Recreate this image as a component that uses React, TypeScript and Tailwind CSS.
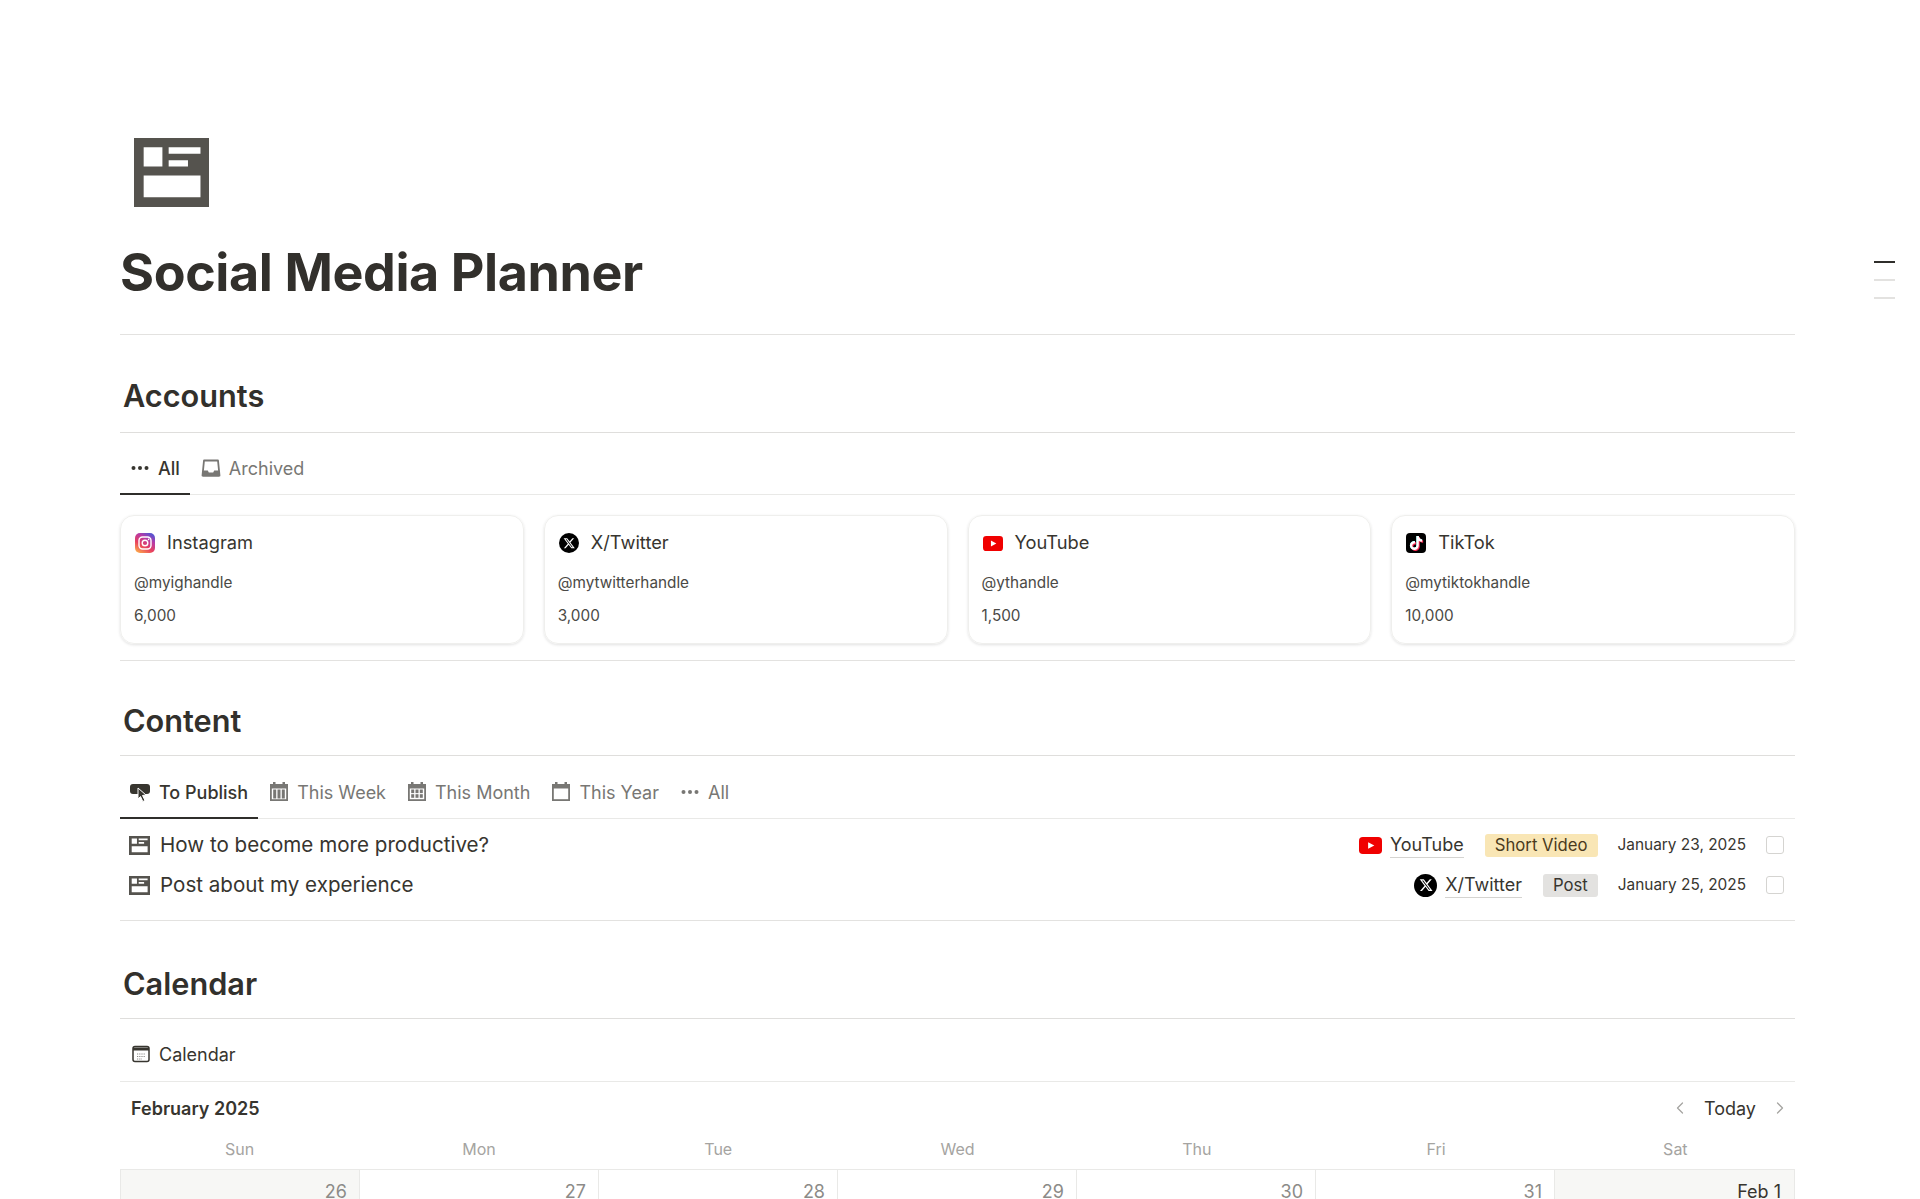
import { ChevronLeft, ChevronRight } from "lucide-react";
import { FaTiktok, FaXTwitter } from "react-icons/fa6";

const PageIcon = ({ className }: { className: string }) => (
  <svg viewBox="0 0 66 70" className={className} preserveAspectRatio="none">
    <path
      fill="#55534e"
      fillRule="evenodd"
      d="M0 0h66v70H0zM8.500 9.500v19.500h16.500V9.500zM30.500 9.500v6.500h28V9.500zM30.500 22.500v6.500h17v-6.500zM8.500 38v22h50V38z"
    />
  </svg>
);

const Dots = ({ color = "#37352f" }: { color?: string }) => (
  <svg viewBox="0 0 20 20" className="h-5 w-5" fill={color}>
    <circle cx="3.500" cy="10" r="2" />
    <circle cx="10" cy="10" r="2" />
    <circle cx="16.500" cy="10" r="2" />
  </svg>
);

const Inbox = () => (
  <svg viewBox="0 0 20 20" className="h-5 w-5" fill="none">
    <path d="M3 2.500h14l1.500 15h-17z" stroke="#787774" strokeWidth="1.800" strokeLinejoin="round" />
    <path d="M1.800 12.500h5l1 2h4.400l1-2h5v6H1.800z" fill="#787774" />
  </svg>
);

const Pointer = () => (
  <svg viewBox="0 0 22 22" className="h-[22px] w-[22px]">
    <rect x="1" y="3" width="20" height="10" rx="3" fill="#37352f" />
    <path d="M9 7l8 7-3.500.5 2.500 5-2.200 1-2.300-5-2.500 2.500z" fill="#37352f" stroke="#fff" strokeWidth="1" />
  </svg>
);

// kind decides which calendar glyph is drawn: week bars, month grid, or empty year page
const CalIcon = ({ kind }: { kind: "week" | "month" | "year" }) => (
  <svg viewBox="0 0 20 20" className="h-5 w-5" fill="#787774">
    <path d="M4 0h2.500v2h7V0H16v2h3v17H1V2h3z" />
    <rect x="2.800" y="6.500" width="14.400" height="10.700" fill="#fff" />
    {kind === "week" && (
      <>
        <rect x="4.200" y="7.500" width="3" height="9" />
        <rect x="8.500" y="7.500" width="3" height="9" />
        <rect x="12.800" y="7.500" width="3" height="9" />
      </>
    )}
    {kind === "month" &&
      [7.500, 12.200].map((y) =>
        [4.200, 8.500, 12.800].map((x) => <rect key={`${x}-${y}`} x={x} y={y} width="3" height="3.600" />),
      )}
  </svg>
);

const Instagram = () => (
  <svg viewBox="0 0 20 20" className="h-5 w-5">
    <defs>
      <linearGradient id="ig" x1="0.100" y1="1" x2="0.700" y2="0">
        <stop offset="0" stopColor="#fdb24a" />
        <stop offset="0.400" stopColor="#e8405f" />
        <stop offset="0.750" stopColor="#b63aa6" />
        <stop offset="1" stopColor="#5b53cf" />
      </linearGradient>
    </defs>
    <rect width="20" height="20" rx="5" fill="url(#ig)" />
    <rect x="4" y="4" width="12" height="12" rx="3.500" fill="none" stroke="#fff" strokeWidth="1.400" />
    <circle cx="10" cy="10" r="2.800" fill="none" stroke="#fff" strokeWidth="1.400" />
    <circle cx="13.600" cy="6.400" r="0.800" fill="#fff" />
  </svg>
);

const XLogo = ({ size }: { size: string }) => (
  <span className={`flex items-center justify-center rounded-full bg-black text-white ${size}`}>
    <FaXTwitter className="h-[62%] w-[62%]" />
  </span>
);

const YouTube = ({ size }: { size: string }) => (
  <svg viewBox="0 0 24 18" className={size} preserveAspectRatio="none">
    <rect width="24" height="18" rx="4" fill="#f00000" />
    <path d="M9.500 5.500L16 9l-6.500 3.500z" fill="#fff" />
  </svg>
);

const TikTok = () => (
  <span className="relative flex h-5 w-5 items-center justify-center rounded-[4px] bg-black">
    <FaTiktok className="absolute left-[2.500px] top-[3px] h-3.5 w-3.5 text-[#25f4ee]" />
    <FaTiktok className="absolute left-[3.500px] top-[3.500px] h-3.5 w-3.5 text-[#fe2c55]" />
    <FaTiktok className="absolute left-[3px] top-[3px] h-3.5 w-3.5 text-white" />
  </span>
);

const accounts = [
  { name: "Instagram", handle: "@myighandle", count: "6,000", icon: <Instagram /> },
  { name: "X/Twitter", handle: "@mytwitterhandle", count: "3,000", icon: <XLogo size="h-5 w-5" /> },
  {
    name: "YouTube",
    handle: "@ythandle",
    count: "1,500",
    icon: (
      <span className="flex h-5 w-5 items-center">
        <YouTube size="h-[15px] w-5" />
      </span>
    ),
  },
  { name: "TikTok", handle: "@mytiktokhandle", count: "10,000", icon: <TikTok /> },
];

const days = [
  { name: "Sun", num: "26", muted: true },
  { name: "Mon", num: "27" },
  { name: "Tue", num: "28" },
  { name: "Wed", num: "29" },
  { name: "Thu", num: "30" },
  { name: "Fri", num: "31" },
  { name: "Sat", num: "Feb 1", muted: true, dark: true },
];

const Heading = ({ children }: { children: string }) => (
  <h2 className="flex h-[42px] items-center pl-[3px] text-[30.700px] font-semibold text-[#32302c]">{children}</h2>
);

const Tab = ({
  icon,
  label,
  active,
  className,
}: {
  icon: React.ReactNode;
  label: string;
  active?: boolean;
  className: string;
}) => (
  <div
    className={`flex h-[52px] items-center gap-[8px] ${className} text-[18px] ${
      active ? "-mb-px border-b-2 border-[#2f2e2b] font-medium text-[#37352f]" : "font-normal text-[#787774]"
    }`}
  >
    {icon}
    {label}
  </div>
);

const Row = ({
  title,
  account,
  tag,
  tagClass,
  date,
}: {
  title: string;
  account: React.ReactNode;
  tag: string;
  tagClass: string;
  date: string;
}) => (
  <div className="flex h-10 items-center pl-[9px] pr-[11px]">
    <PageIcon className="h-[19px] w-[21px]" />
    <span className="ml-[10px] flex-1 text-[20.600px] font-normal text-[#37352f]">{title}</span>
    {account}
    <span className={`ml-[21px] rounded-[3px] px-[10px] text-[16.700px] leading-[23px] ${tagClass}`}>{tag}</span>
    <span className="ml-[20px] text-[15.400px] text-[#37352f]">{date}</span>
    <span className="ml-[20px] h-[18px] w-[18px] rounded-[3px] border-[1.500px] border-[#d5d4d1]" />
  </div>
);

const AccountRef = ({ icon, name }: { icon: React.ReactNode; name: string }) => (
  <span className="flex items-center gap-2">
    {icon}
    <span className="border-b border-[#d5d4d1] text-[18px] leading-[24px] font-normal text-[#37352f]">{name}</span>
  </span>
);

export default function App() {
  return (
    <div className="relative h-[1199px] w-full overflow-hidden bg-white font-['Inter',sans-serif] text-[#37352f]">
      <div className="absolute right-[25px] top-[261px] flex w-[21px] flex-col gap-4">
        <div className="h-[2px] bg-[#2f2e2b]" />
        <div className="h-[2px] bg-[#e3e2e0]" />
        <div className="h-[2px] bg-[#e3e2e0]" />
      </div>

      <div className="ml-[120px] mr-[125px] pt-[138px]">
        <PageIcon className="ml-[14px] h-[69px] w-[75px]" />
        <h1 className="mt-[39px] h-[54px] text-[52px] leading-[54px] font-bold tracking-[-0.4px] text-[#32302c]">
          Social Media Planner
        </h1>
        <div className="mt-[34px] h-px bg-[#e3e2e0]" />

        <div className="mt-[40px]">
          <Heading>Accounts</Heading>
        </div>
        <div className="mt-[15px] h-px bg-[#dfdedc]" />
        <div className="flex h-[62px] items-end border-b border-[#e9e9e7]">
          <Tab icon={<Dots />} label="All" active className="pl-[10px] pr-[10px]" />
          <Tab icon={<Inbox />} label="Archived" className="pl-[11px]" />
        </div>

        <div className="mt-[20px] grid grid-cols-4 gap-5">
          {accounts.map((a) => (
            <div
              key={a.name}
              className="h-[129px] rounded-[14px] border border-[#efefed] px-[13px] pt-[15px] shadow-[0_1px_3px_rgba(15,15,15,0.12)]"
            >
              <div className="ml-px flex h-6 items-center gap-3 text-[18.300px] font-normal text-[#37352f]">
                {a.icon}
                {a.name}
              </div>
              <p className="mt-[16px] text-[15.300px] leading-[24px] text-[#4a4945]">{a.handle}</p>
              <p className="mt-[9px] text-[15.300px] leading-[24px] text-[#4a4945]">{a.count}</p>
            </div>
          ))}
        </div>
        <div className="mt-[16px] h-px bg-[#e3e2e0]" />

        <div className="mt-[39px]">
          <Heading>Content</Heading>
        </div>
        <div className="mt-[13px] h-px bg-[#dfdedc]" />
        <div className="flex h-[63px] items-end border-b border-[#e9e9e7]">
          <Tab icon={<Pointer />} label="To Publish" active className="pl-[9px] pr-[10px]" />
          <Tab icon={<CalIcon kind="week" />} label="This Week" className="pl-[11px] pr-[10px]" />
          <Tab icon={<CalIcon kind="month" />} label="This Month" className="pl-[11px] pr-[10px]" />
          <Tab icon={<CalIcon kind="year" />} label="This Year" className="pl-[11px] pr-[10px]" />
          <Tab icon={<Dots color="#787774" />} label="All" className="pl-[11px]" />
        </div>
        <div className="pt-[6px]">
          <Row
            title="How to become more productive?"
            account={<AccountRef icon={<YouTube size="h-[17px] w-[23px]" />} name="YouTube" />}
            tag="Short Video"
            tagClass="bg-[#f9e6b5] text-[#4a3a1c]"
            date="January 23, 2025"
          />
          <Row
            title="Post about my experience"
            account={<AccountRef icon={<XLogo size="h-[23px] w-[23px]" />} name="X/Twitter" />}
            tag="Post"
            tagClass="bg-[#e3e2e0] text-[#37352f]"
            date="January 25, 2025"
          />
        </div>
        <div className="mt-[15px] h-px bg-[#e3e2e0]" />

        <div className="mt-[42px]">
          <Heading>Calendar</Heading>
        </div>
        <div className="mt-[13px] h-px bg-[#dfdedc]" />
        <div className="flex h-[63px] items-center gap-[9px] border-b border-[#e9e9e7] pl-[12px] pt-[8px] text-[18px] font-normal text-[#37352f]">
          <svg viewBox="0 0 18 18" className="h-[18px] w-[18px]" fill="none">
            <rect x="1" y="1.500" width="16" height="15" rx="2" stroke="#37352f" strokeWidth="1.500" />
            <path d="M1 2.500h16v3H1z" fill="#37352f" />
            <path d="M5 9h8M5 11.500h8M5 14h5" stroke="#8a8986" strokeWidth="1.200" strokeDasharray="1.200 1" />
          </svg>
          Calendar
        </div>
        <div className="flex h-[52px] items-center pl-[11px] pr-[5px]">
          <span className="flex-1 text-[18px] font-semibold text-[#37352f]">February 2025</span>
          <ChevronLeft className="h-5 w-5 text-[#a5a4a1]" strokeWidth={1.500} />
          <span className="mx-[14px] text-[18px] font-normal text-[#37352f]">Today</span>
          <ChevronRight className="h-5 w-5 text-[#a5a4a1]" strokeWidth={1.500} />
        </div>
        <div className="grid grid-cols-7 border-b border-[#e9e9e7] pb-[8px] pt-[3px]">
          {days.map((d) => (
            <div key={d.name} className="h-6 text-center text-[16px] leading-[24px] text-[#a5a4a1]">
              {d.name}
            </div>
          ))}
        </div>
        <div className="grid grid-cols-7 border-x border-[#e9e9e7]">
          {days.map((d) => (
            <div
              key={d.num}
              className={`h-[160px] border-r border-[#e9e9e7] pt-[10px] text-right text-[18px] leading-[24px] last:border-r-0 ${
                d.muted ? "bg-[#f7f7f5]" : "bg-white"
              } ${d.dark ? "pr-[13px] text-[#37352f]" : "pr-3 text-[#8c8b88]"}`}
            >
              {d.num}
            </div>
          ))}
        </div>
      </div>
    </div>
  );
}
